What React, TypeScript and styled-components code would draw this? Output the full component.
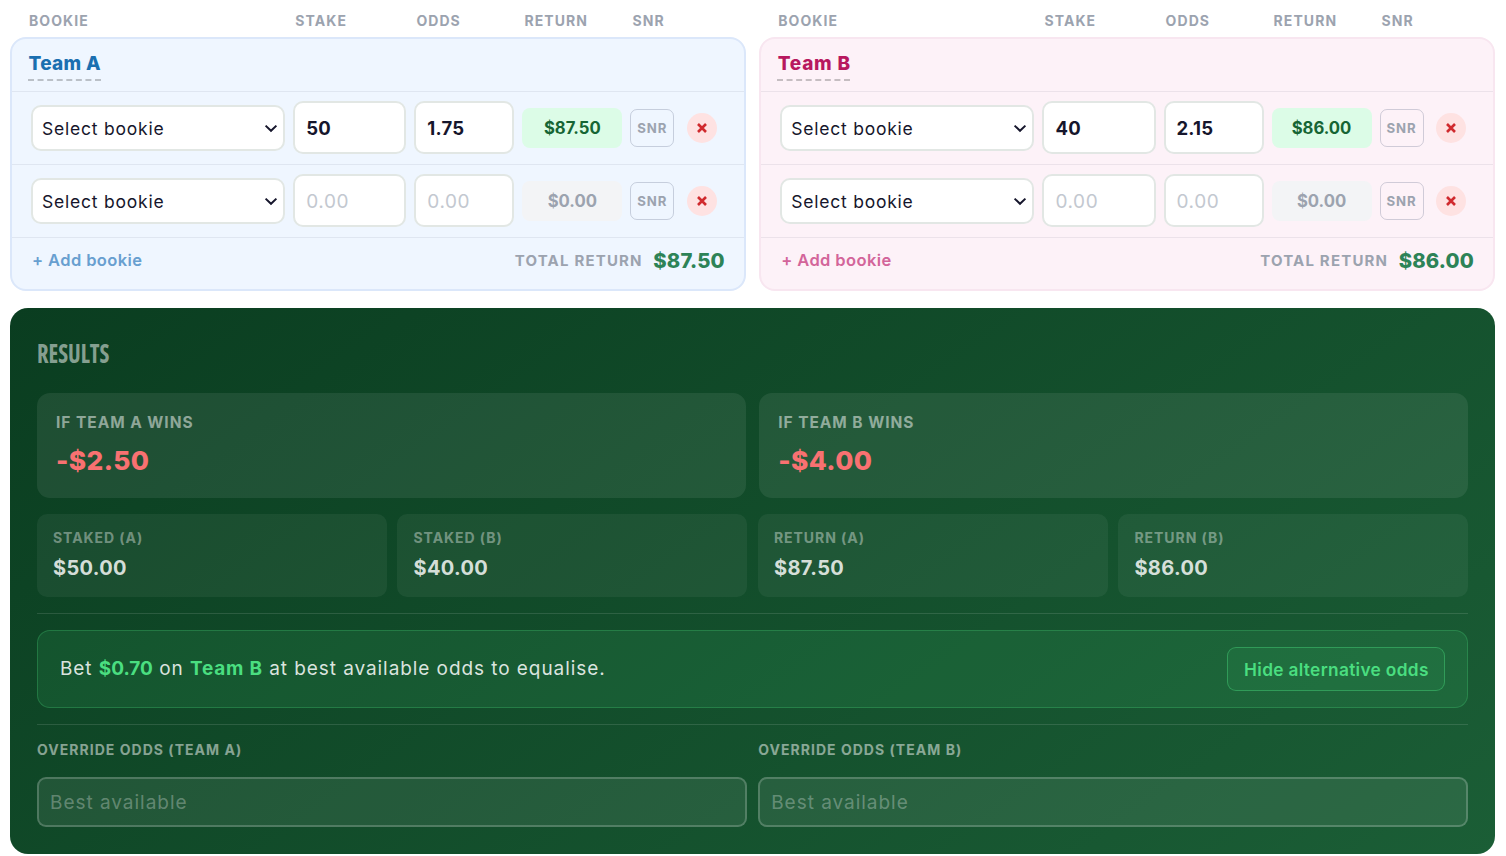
import { useState } from 'react'
import styled, { createGlobalStyle } from 'styled-components'

type Side = 'a' | 'b'

type Bet = {
    stake: string
    odds: string
}

type PanelProps = {
    side: Side
    name: string
    initialBets: Bet[]
}

const themes = {
    a: { bg: '#eff6ff', border: '#dbe7fa', title: '#1a6fb0', add: '#689fd0' },
    b: { bg: '#fdf2f8', border: '#f8e6f0', title: '#b8185f', add: '#d3659a' },
}

const money = (val: number) => `$${val.toFixed(2)}`

const betReturn = (bet: Bet) => (Number(bet.stake) || 0) * (Number(bet.odds) || 0)

function TeamPanel({ side, name, initialBets }: PanelProps) {
    const [bets, setBets] = useState(initialBets)

    const update = (index: number, key: keyof Bet, value: string) =>
        setBets(bets.map((bet, i) => (i === index ? { ...bet, [key]: value } : bet)))

    const total = bets.reduce((sum, bet) => sum + betReturn(bet), 0)

    return (
        <section>
            <ColumnHeads>
                <span>BOOKIE</span>
                <span>STAKE</span>
                <span>ODDS</span>
                <span>RETURN</span>
                <span>SNR</span>
            </ColumnHeads>
            <Panel $side={side}>
                <PanelHeader>
                    <TeamName $side={side}>{name}</TeamName>
                </PanelHeader>
                {bets.map((bet, index) => (
                    <BetRow key={index}>
                        <BookieSelect type="button">
                            Select bookie
                            <Chevron viewBox="0 0 14 9">
                                <path d="M1.6 1.6 7 6.8l5.4-5.2" />
                            </Chevron>
                        </BookieSelect>
                        <NumberInput
                            value={bet.stake}
                            placeholder="0.00"
                            onChange={(e) => update(index, 'stake', e.target.value)}
                        />
                        <NumberInput
                            value={bet.odds}
                            placeholder="0.00"
                            onChange={(e) => update(index, 'odds', e.target.value)}
                        />
                        <ReturnBox $active={betReturn(bet) > 0}>
                            {money(betReturn(bet))}
                        </ReturnBox>
                        <SnrButton type="button">SNR</SnrButton>
                        <RemoveButton
                            type="button"
                            aria-label="Remove"
                            onClick={() => setBets(bets.filter((_, i) => i !== index))}
                        >
                            <svg width="10" height="10" viewBox="0 0 10 10">
                                <path d="M1 1l8 8M9 1L1 9" stroke="#d02a2e" strokeWidth="2.6" />
                            </svg>
                        </RemoveButton>
                    </BetRow>
                ))}
                <PanelFooter>
                    <AddButton
                        type="button"
                        $side={side}
                        onClick={() => setBets([...bets, { stake: '', odds: '' }])}
                    >
                        + Add bookie
                    </AddButton>
                    <TotalLabel>TOTAL RETURN</TotalLabel>
                    <TotalValue>{money(total)}</TotalValue>
                </PanelFooter>
            </Panel>
        </section>
    )
}

const outcomes = [
    { label: 'IF TEAM A WINS', value: '-$2.50' },
    { label: 'IF TEAM B WINS', value: '-$4.00' },
]

const stats = [
    { label: 'STAKED (A)', value: '$50.00' },
    { label: 'STAKED (B)', value: '$40.00' },
    { label: 'RETURN (A)', value: '$87.50' },
    { label: 'RETURN (B)', value: '$86.00' },
]

export default function App() {
    return (
        <Page>
            <GlobalStyle />
            <Teams>
                <TeamPanel
                    side="a"
                    name="Team A"
                    initialBets={[
                        { stake: '50', odds: '1.75' },
                        { stake: '', odds: '' },
                    ]}
                />
                <TeamPanel
                    side="b"
                    name="Team B"
                    initialBets={[
                        { stake: '40', odds: '2.15' },
                        { stake: '', odds: '' },
                    ]}
                />
            </Teams>
            <Results>
                <ResultsTitle>RESULTS</ResultsTitle>
                <Outcomes>
                    {outcomes.map(({ label, value }) => (
                        <Outcome key={label}>
                            <OutcomeLabel>{label}</OutcomeLabel>
                            <OutcomeValue>{value}</OutcomeValue>
                        </Outcome>
                    ))}
                </Outcomes>
                <Stats>
                    {stats.map(({ label, value }) => (
                        <Stat key={label}>
                            <StatLabel>{label}</StatLabel>
                            <StatValue>{value}</StatValue>
                        </Stat>
                    ))}
                </Stats>
                <Divider />
                <Advice>
                    <AdviceText>
                        Bet <strong>$0.70</strong> on <strong>Team B</strong> at best
                        available odds to equalise.
                    </AdviceText>
                    <ToggleButton type="button">Hide alternative odds</ToggleButton>
                </Advice>
                <Divider />
                <Overrides>
                    <label>
                        <OverrideLabel>OVERRIDE ODDS (TEAM A)</OverrideLabel>
                        <OverrideInput placeholder="Best available" />
                    </label>
                    <label>
                        <OverrideLabel>OVERRIDE ODDS (TEAM B)</OverrideLabel>
                        <OverrideInput placeholder="Best available" />
                    </label>
                </Overrides>
            </Results>
        </Page>
    )
}

const GlobalStyle = createGlobalStyle`
    *, *::before, *::after {
        box-sizing: border-box;
    }
    body {
        margin: 0;
        background: #fff;
    }
    body, button, input {
        font-family: Inter, sans-serif;
    }
    button {
        padding: 0;
        border: none;
        background: none;
        cursor: pointer;
    }
`

const Page = styled.main`
    height: 856px;
    padding: 5px 10.6px 0 10px;
    overflow: hidden;
`

const Teams = styled.div`
    display: grid;
    grid-template-columns: 1fr 1fr;
    gap: 13px;
`

const betColumns = '1fr 113.1px 100px 100px 44px 39.8px'

const ColumnHeads = styled.div`
    display: grid;
    grid-template-columns: ${betColumns};
    gap: 8px;
    height: 32px;
    padding: 0 22px 0 19px;
    color: #9ca3af;
    font-size: 14px;
    font-weight: 700;
    line-height: 32px;
    letter-spacing: 1.07px;
`

const Panel = styled.div<{ $side: Side }>`
    border: 2px solid ${({ $side }) => themes[$side].border};
    border-radius: 16px;
    background: ${({ $side }) => themes[$side].bg};
    overflow: hidden;
`

const PanelHeader = styled.div`
    height: 53px;
    padding: 12px 16px 0;
    border-bottom: 1px solid rgba(15, 23, 60, 0.07);
`

const TeamName = styled.div<{ $side: Side }>`
    width: 72.5px;
    height: 30px;
    padding-left: 0.5px;
    border-bottom: 2px dashed rgba(0, 0, 0, 0.22);
    color: ${({ $side }) => themes[$side].title};
    font-size: 19px;
    font-weight: 800;
    line-height: 26px;
    letter-spacing: ${({ $side }) => ($side === 'a' ? '0.3px' : '0.75px')};
    white-space: nowrap;
`

const BetRow = styled.div`
    display: grid;
    grid-template-columns: ${betColumns};
    align-items: center;
    gap: 8px;
    height: 73px;
    padding: 0 22.1px 0 19px;
    border-bottom: 1px solid rgba(15, 23, 60, 0.07);
`

const BookieSelect = styled.button`
    display: flex;
    align-items: center;
    justify-content: space-between;
    height: 46px;
    padding: 0 5px 0 9px;
    border: 2px solid #e2e7e4;
    border-radius: 10px;
    background: #fff;
    color: #16162c;
    font-size: 17.5px;
    letter-spacing: 0.78px;
`

const Chevron = styled.svg`
    width: 14px;
    height: 9px;
    fill: none;
    stroke: #16162c;
    stroke-width: 2;
`

const NumberInput = styled.input`
    width: 100%;
    height: 53px;
    margin-bottom: 1px;
    padding: 0 11px;
    border: 2px solid #e2e7e4;
    border-radius: 10px;
    outline: none;
    background: #fff;
    color: #16162c;
    font-size: 18.5px;
    font-weight: 700;
    letter-spacing: 0.2px;

    &::placeholder {
        color: #c3c8d0;
        font-size: 19px;
        font-weight: 400;
        letter-spacing: 0.6px;
    }
`

const ReturnBox = styled.div<{ $active: boolean }>`
    height: 40px;
    border-radius: 8px;
    background: ${({ $active }) => ($active ? '#dcfce7' : '#f3f4f6')};
    color: ${({ $active }) => ($active ? '#166534' : '#9ca3af')};
    font-size: 16.7px;
    font-weight: 700;
    line-height: 40px;
    text-align: center;
`

const SnrButton = styled.button`
    height: 38px;
    border: 1px solid rgba(90, 100, 130, 0.27);
    border-radius: 7px;
    color: #9ca3af;
    font-size: 13.2px;
    font-weight: 700;
    letter-spacing: 0.9px;
`

const RemoveButton = styled.button`
    display: grid;
    place-items: center;
    justify-self: center;
    width: 30px;
    height: 30px;
    border-radius: 50%;
    background: #fee2e2;
`

const PanelFooter = styled.div`
    display: flex;
    align-items: center;
    height: 51px;
    padding: 0 19.5px 7px 20px;
`

const AddButton = styled.button<{ $side: Side }>`
    margin-right: auto;
    color: ${({ $side }) => themes[$side].add};
    font-size: 16.5px;
    font-weight: 600;
    letter-spacing: 0.4px;
`

const TotalLabel = styled.span`
    margin-right: 10.5px;
    color: #9ca3af;
    font-size: 15px;
    font-weight: 700;
    letter-spacing: 1.18px;
`

const TotalValue = styled.span`
    color: #2d8357;
    font-size: 20.3px;
    font-weight: 800;
    letter-spacing: 0.15px;
`

const Results = styled.section`
    height: 546px;
    margin-top: 17px;
    padding: 30px 27px 0;
    border-radius: 18px;
    background: linear-gradient(145deg, #0a3d20 0%, #1b5e36 100%);
`

const ResultsTitle = styled.h2`
    width: max-content;
    height: 55px;
    margin: 0;
    color: rgba(255, 255, 255, 0.52);
    font-family: 'Open Sans', sans-serif;
    font-size: 27.5px;
    font-stretch: 75%;
    font-weight: 700;
    line-height: 30px;
    transform: scaleX(0.82);
    transform-origin: left;
`

const Outcomes = styled.div`
    display: grid;
    grid-template-columns: 1fr 1fr;
    gap: 13px;
`

const Outcome = styled.div`
    height: 105px;
    padding: 19px;
    border-radius: 13px;
    background: rgba(255, 255, 255, 0.08);
`

const OutcomeLabel = styled.div`
    color: rgba(255, 255, 255, 0.5);
    font-size: 15.5px;
    font-weight: 700;
    line-height: 21px;
    letter-spacing: 0.95px;
`

const OutcomeValue = styled.div`
    margin-top: 10px;
    color: #f87171;
    font-size: 26.3px;
    font-weight: 800;
    line-height: 36px;
    letter-spacing: 0.4px;
`

const Stats = styled.div`
    display: grid;
    grid-template-columns: repeat(4, 1fr);
    gap: 10.5px;
    margin-top: 16px;
`

const Stat = styled.div`
    height: 83px;
    padding: 13px 16px;
    border-radius: 10px;
    background: rgba(255, 255, 255, 0.055);
`

const StatLabel = styled.div`
    color: rgba(255, 255, 255, 0.4);
    font-size: 14px;
    font-weight: 700;
    line-height: 21px;
    letter-spacing: 0.95px;
`

const StatValue = styled.div`
    margin-top: 8px;
    color: rgba(255, 255, 255, 0.83);
    font-size: 20px;
    font-weight: 700;
    line-height: 24px;
    letter-spacing: 0.35px;
`

const Divider = styled.div`
    height: 1px;
    margin: 16px 0;
    background: rgba(255, 255, 255, 0.12);
`

const Advice = styled.div`
    display: flex;
    align-items: center;
    justify-content: space-between;
    height: 78px;
    padding: 0 22px;
    border: 1px solid rgba(74, 222, 128, 0.25);
    border-radius: 13px;
    background: rgba(74, 222, 128, 0.11);
`

const AdviceText = styled.p`
    margin: 0 0 1px;
    color: rgba(255, 255, 255, 0.85);
    font-size: 19px;
    letter-spacing: 0.93px;

    strong {
        color: #4ade80;
        font-weight: 700;
        letter-spacing: 0.8px;
    }

    strong:first-child {
        letter-spacing: 0;
    }
`

const ToggleButton = styled.button`
    width: 218px;
    height: 44px;
    border: 1px solid rgba(74, 222, 128, 0.4);
    border-radius: 9px;
    background: rgba(74, 222, 128, 0.08);
    color: #4ade80;
    font-size: 17.3px;
    font-weight: 600;
    letter-spacing: 0.33px;
    white-space: nowrap;
`

const Overrides = styled.div`
    display: grid;
    grid-template-columns: 1fr 1fr;
    gap: 11px;
    margin-top: -1px;
`

const OverrideLabel = styled.div`
    height: 37px;
    color: rgba(255, 255, 255, 0.5);
    font-size: 14px;
    font-weight: 700;
    line-height: 19px;
    letter-spacing: 1.03px;
`

const OverrideInput = styled.input`
    display: block;
    width: 100%;
    height: 50px;
    padding: 0 11px;
    border: 2px solid rgba(255, 255, 255, 0.2);
    border-radius: 9px;
    outline: none;
    background: rgba(255, 255, 255, 0.08);
    color: #fff;
    font-size: 19px;
    letter-spacing: 0.97px;

    &::placeholder {
        color: rgba(255, 255, 255, 0.3);
    }
`
